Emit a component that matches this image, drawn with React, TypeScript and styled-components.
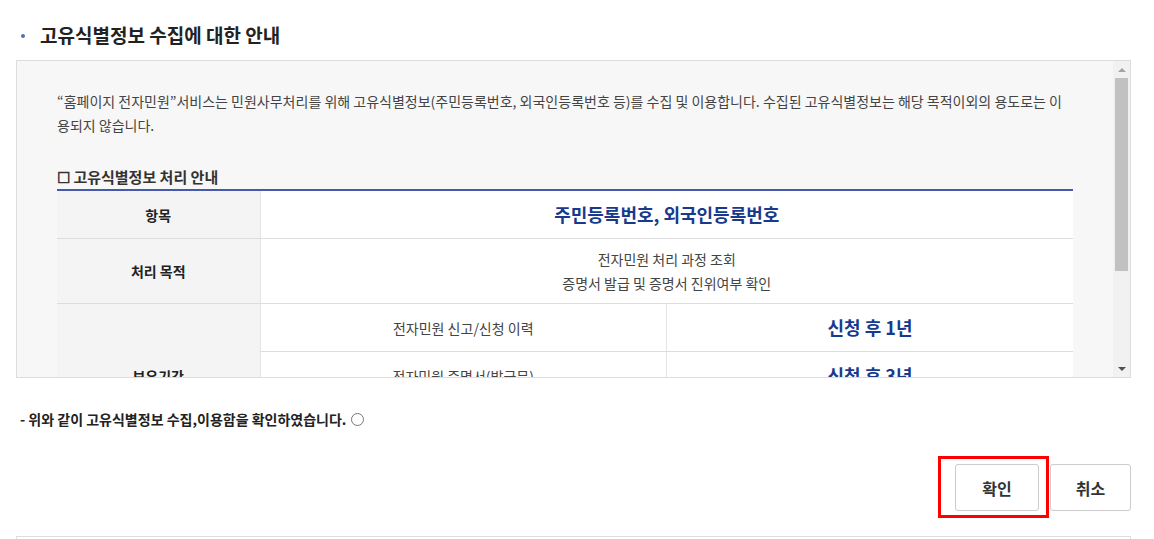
import styled, { createGlobalStyle } from "styled-components";

const GlobalStyle = createGlobalStyle`
  body {
    margin: 0;
    background: #fff;
    font-family: "Noto Sans CJK KR", "Noto Sans", sans-serif;
    color: #333;
  }
`;

const Page = styled.div`
  padding: 23px 23px 0 16px;
`;

const Title = styled.h3`
  display: flex;
  align-items: center;
  margin: 0 0 13px;
  font-size: 19px;
  line-height: 24px;
  font-weight: 700;
  color: #222;

  &::before {
    content: "";
    width: 4px;
    height: 4px;
    border-radius: 50%;
    background: #5a6db5;
    margin: 2px 15px 0 5px;
  }
`;

const ScrollBox = styled.div`
  display: flex;
  height: 316px;
  border: 1px solid #ddd;
  background: #f7f7f7;
`;

const ScrollContent = styled.div`
  flex: 1;
  overflow: hidden;
  padding: 28px 40px 0;
`;

const Intro = styled.p`
  margin: 0;
  font-size: 14px;
  line-height: 24px;
  color: #444;
`;

const SubTitle = styled.h4`
  margin: 30px 0 2px;
  font-size: 15px;
  line-height: 20px;
  font-weight: 700;
  color: #333;
`;

const Table = styled.table`
  width: 100%;
  border-collapse: collapse;
  border-top: 2px solid #4759ab;
  table-layout: fixed;
`;

const Th = styled.th`
  box-sizing: border-box;
  width: 203px;
  background: #f4f4f4;
  border-bottom: 1px solid #ddd;
  font-size: 14px;
  line-height: 24px;
  font-weight: 700;
  color: #222;
  padding: 8px 10px;
`;

const Td = styled.td<{ $strong?: boolean }>`
  background: #fff;
  border-bottom: 1px solid #ddd;
  border-left: 1px solid #e4e4e4;
  text-align: center;
  padding: 8px 10px;
  font-size: ${(p) => (p.$strong ? "18px" : "14px")};
  line-height: ${(p) => (p.$strong ? "31px" : "24px")};
  font-weight: ${(p) => (p.$strong ? 700 : 400)};
  color: ${(p) => (p.$strong ? "#173a8c" : "#444")};
`;

const ScrollBar = styled.div`
  width: 17px;
  display: flex;
  flex-direction: column;
  background: #f1f1f1;
`;

const Arrow = styled.div<{ $down?: boolean }>`
  height: 17px;
  display: flex;
  align-items: center;
  justify-content: center;

  &::after {
    content: "";
    border-left: 4px solid transparent;
    border-right: 4px solid transparent;
    ${(p) =>
      p.$down
        ? "border-top: 4px solid #505050;"
        : "border-bottom: 4px solid #a3a3a3;"}
  }
`;

const Track = styled.div`
  flex: 1;
  padding: 0 2px;
`;

const Thumb = styled.div`
  height: 193px;
  background: #c1c1c1;
`;

const Agree = styled.div`
  display: flex;
  align-items: center;
  gap: 5px;
  margin: 31px 0 0 4px;
  font-size: 14px;
  line-height: 20px;
  font-weight: 700;
  color: #222;
`;

const Radio = styled.span`
  width: 11px;
  height: 11px;
  border: 1px solid #777;
  border-radius: 50%;
  background: #fff;
  margin-top: 1px;
`;

const Buttons = styled.div`
  display: flex;
  justify-content: flex-end;
  gap: 11px;
  margin-top: 35px;
`;

const Highlight = styled.div`
  position: relative;

  &::after {
    content: "";
    position: absolute;
    left: -17px;
    top: -8px;
    width: 105px;
    height: 56px;
    border: 3px solid #f00;
  }
`;

const Button = styled.button<{ $w: number }>`
  width: ${(p) => p.$w}px;
  height: 47px;
  border: 1px solid #ccc;
  border-radius: 3px;
  background: #fff;
  font-family: inherit;
  font-size: 16px;
  font-weight: 700;
  color: #333;
`;

const NextBox = styled.div`
  margin-top: 25px;
  height: 20px;
  border: 1px solid #ddd;
  border-bottom: none;
`;

const periods = [
  { item: "전자민원 신고/신청 이력", term: "신청 후 1년" },
  { item: "전자민원 증명서(발급문)", term: "신청 후 3년" },
  { item: "전자민원 처리 결과", term: "신청 후 5년" },
];

export default function App() {
  return (
    <Page>
      <GlobalStyle />
      <Title>고유식별정보 수집에 대한 안내</Title>
      <ScrollBox>
        <ScrollContent>
          <Intro>
            “홈페이지 전자민원”서비스는 민원사무처리를 위해 고유식별정보(주민등록번호, 외국인등록번호 등)를 수집 및 이용합니다. 수집된 고유식별정보는 해당 목적이외의 용도로는 이용되지 않습니다.
          </Intro>
          <SubTitle>☐ 고유식별정보 처리 안내</SubTitle>
          <Table>
            <tbody>
              <tr>
                <Th>항목</Th>
                <Td colSpan={2} $strong>
                  주민등록번호, 외국인등록번호
                </Td>
              </tr>
              <tr>
                <Th>처리 목적</Th>
                <Td colSpan={2}>
                  전자민원 처리 과정 조회
                  <br />
                  증명서 발급 및 증명서 진위여부 확인
                </Td>
              </tr>
              {periods.map((row, index) => (
                <tr key={index}>
                  {index === 0 && <Th rowSpan={periods.length}>보유기간</Th>}
                  <Td>{row.item}</Td>
                  <Td $strong>{row.term}</Td>
                </tr>
              ))}
            </tbody>
          </Table>
        </ScrollContent>
        <ScrollBar>
          <Arrow />
          <Track>
            <Thumb />
          </Track>
          <Arrow $down />
        </ScrollBar>
      </ScrollBox>
      <Agree>
        - 위와 같이 고유식별정보 수집,이용함을 확인하였습니다.
        <Radio />
      </Agree>
      <Buttons>
        <Highlight>
          <Button $w={84}>확인</Button>
        </Highlight>
        <Button $w={81}>취소</Button>
      </Buttons>
      <NextBox />
    </Page>
  );
}
